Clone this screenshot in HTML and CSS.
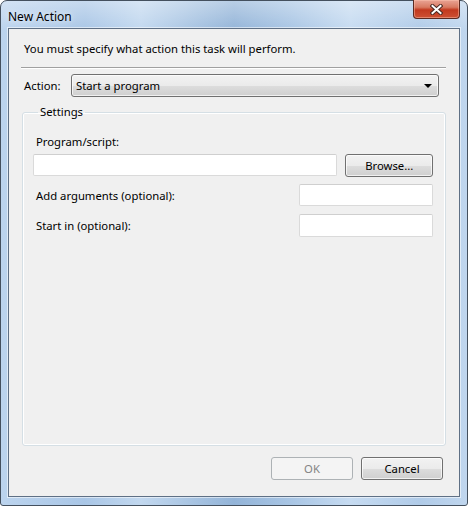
FILE: index.html
```html
<!DOCTYPE html>
<html lang="en">
<head>
    <meta charset="UTF-8">
    <title>New Action</title>
    <link rel="stylesheet" href="styles.css">
</head>
<body>
    <div class="window">
        <div class="titlebar">
            <span class="title">New Action</span>
            <div class="close-btn">
                <svg width="13" height="11" viewBox="0 0 13 11">
                    <path d="M2.5 2 L10.5 9 M10.5 2 L2.5 9" stroke="#4a2a24" stroke-width="4" stroke-linecap="square"/>
                    <path d="M2.5 2 L10.5 9 M10.5 2 L2.5 9" stroke="#ffffff" stroke-width="2" stroke-linecap="square"/>
                </svg>
            </div>
        </div>

        <div class="client">
            <p class="intro">You must specify what action this task will perform.</p>
            <div class="separator"></div>

            <div class="action-row">
                <span class="label">Action:</span>
                <div class="combo">
                    <span>Start a program</span>
                    <span class="arrow"></span>
                </div>
            </div>

            <fieldset class="group">
                <legend>Settings</legend>
                <div class="label prog-label">Program/script:</div>
                <div class="prog-row">
                    <div class="textbox prog-box"></div>
                    <div class="btn browse">Browse...</div>
                </div>
                <div class="opt-row">
                    <span class="label">Add arguments (optional):</span>
                    <div class="textbox small-box"></div>
                </div>
                <div class="opt-row">
                    <span class="label">Start in (optional):</span>
                    <div class="textbox small-box"></div>
                </div>
            </fieldset>

            <div class="footer">
                <div class="btn disabled">OK</div>
                <div class="btn">Cancel</div>
            </div>
        </div>
    </div>
</body>
</html>
```

FILE: styles.css
```css
/* Base */
body {
    margin: 0;
    padding: 0;
    background: #ffffff;
    font-family: "Segoe UI", "Noto Sans", sans-serif;
    font-size: 11.3px;
    color: #000000;
}

/* Window frame (Aero glass) */
.window {
    width: 468px;
    height: 506px;
    box-sizing: border-box;
    display: flex;
    flex-direction: column;
    padding: 0 7px 8px 7px;
    border: 1px solid #44505e;
    border-radius: 7px 7px 3px 3px;
    background:
        linear-gradient(to bottom, rgba(255, 255, 255, 0.35), rgba(255, 255, 255, 0) 30px),
        linear-gradient(to right, #bcd4ee 0%, #a9c6e6 18%, #c2d8ef 30%, #93b4d8 50%, #a8c5e4 62%, #c6dbf1 75%, #b0cbe8 90%, #c0d6ee 100%);
}

/* Title bar */
.titlebar {
    height: 27px;
    display: flex;
    align-items: flex-start;
    flex-shrink: 0;
}

.title {
    margin-top: 7px;
    font-size: 12px;
    color: #000000;
    text-shadow: 0 0 6px rgba(255, 255, 255, 0.9);
}

.close-btn {
    margin-left: auto;
    margin-top: -1px;
    width: 45px;
    height: 18px;
    border: 1px solid #5b2a22;
    border-top: none;
    border-radius: 0 0 4px 4px;
    background: linear-gradient(to bottom, #e9a495 0%, #d87a62 40%, #c2391f 55%, #cd5134 100%);
    box-shadow: inset 0 0 0 1px rgba(255, 200, 180, 0.45);
    display: flex;
    align-items: center;
    justify-content: center;
}

/* Client area */
.client {
    flex: 1;
    background: #f0f0f0;
    border: 1px solid #5f7085;
    box-shadow: 0 0 0 1px rgba(255, 255, 255, 0.55);
    display: flex;
    flex-direction: column;
    padding: 0 16px 0 12px;
}

.intro {
    margin: 12px 0 0 3px;
    line-height: 16px;
}

.separator {
    margin: 10px -3px 0 0;
    border-top: 1px solid #a0a0a0;
    border-bottom: 1px solid #ffffff;
}

/* Action row */
.action-row {
    display: flex;
    align-items: center;
    margin-top: 5px;
}

.action-row .label {
    width: 47px;
    padding-left: 3px;
}

.combo {
    width: 368px;
    height: 23px;
    box-sizing: border-box;
    border: 1px solid #707070;
    border-radius: 3px;
    background: linear-gradient(to bottom, #f2f2f2 0%, #ebebeb 50%, #dddddd 51%, #cfcfcf 100%);
    box-shadow: inset 0 0 0 1px rgba(255, 255, 255, 0.7);
    display: flex;
    align-items: center;
    justify-content: space-between;
    padding: 0 6px 0 4px;
}

.combo .arrow {
    width: 0;
    height: 0;
    border-left: 4px solid transparent;
    border-right: 4px solid transparent;
    border-top: 4px solid #000000;
}

/* Settings group */
.group {
    margin: 7px -3px 0 1px;
    padding: 0 12px 0 10px;
    height: 342px;
    box-sizing: border-box;
    border: 1px solid #d5dfe5;
    border-radius: 3px;
    box-shadow: inset 0 0 0 1px #ffffff;
    min-width: 0;
}

.group legend {
    margin-left: 5px;
    padding: 0 2px;
    line-height: 16px;
}

.prog-label {
    margin: 14px 0 0 3px;
}

.prog-row {
    display: flex;
    align-items: flex-start;
    margin-top: 5px;
}

.textbox {
    height: 20px;
    background: #ffffff;
    border: 1px solid #dadada;
    border-top-color: #cfcfcf;
    border-radius: 2px;
}

.prog-box {
    width: 304px;
}

.btn {
    width: 80px;
    height: 21px;
    border: 1px solid #707070;
    border-radius: 3px;
    background: linear-gradient(to bottom, #f2f2f2 0%, #ebebeb 50%, #dddddd 51%, #cfcfcf 100%);
    box-shadow: inset 0 0 0 1px rgba(255, 255, 255, 0.7);
    display: flex;
    align-items: center;
    justify-content: center;
}

.browse {
    width: 86px;
    margin-left: 8px;
}

.opt-row {
    display: flex;
    align-items: center;
    justify-content: space-between;
    margin-top: 7px;
}

.opt-row + .opt-row {
    margin-top: 8px;
}

.opt-row + .opt-row .textbox {
    height: 21px;
}

.opt-row .label {
    padding-left: 3px;
}

.small-box {
    width: 132px;
}

/* Footer buttons */
.footer {
    display: flex;
    justify-content: flex-end;
    gap: 8px;
    margin-top: 11px;
}

.btn.disabled {
    border-color: #adb2b5;
    background: #f4f4f4;
    box-shadow: none;
    color: #838383;
}
```
